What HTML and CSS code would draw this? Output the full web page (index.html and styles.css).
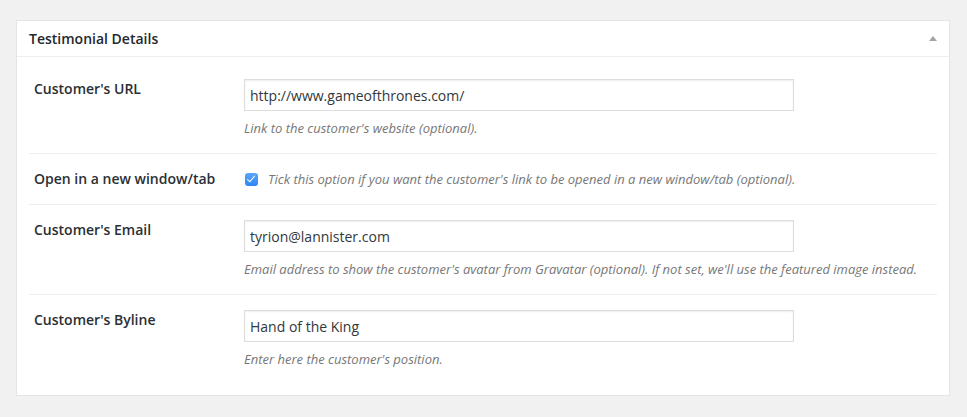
FILE: index.html
```html
<!DOCTYPE html>
<html lang="en">
<head>
<meta charset="utf-8">
<title>Testimonial Details</title>
<link rel="stylesheet" href="styles.css">
</head>
<body>
<div class="postbox">
  <div class="postbox-header">
    <h2 class="hndle">Testimonial Details</h2>
    <span class="toggle-arrow" aria-hidden="true"></span>
  </div>
  <div class="inside">
    <table class="form-table">
      <tbody>
        <tr>
          <th><label for="url">Customer's URL</label></th>
          <td>
            <input id="url" class="regular-text" type="text" value="http://www.gameofthrones.com/">
            <p class="description">Link to the customer's website (optional).</p>
          </td>
        </tr>
        <tr class="row-check">
          <th><label for="newtab">Open in a new window/tab</label></th>
          <td>
            <label class="check-label"><input id="newtab" class="check" type="checkbox" checked><span class="description inline">Tick this option if you want the customer's link to be opened in a new window/tab (optional).</span></label>
          </td>
        </tr>
        <tr>
          <th><label for="email">Customer's Email</label></th>
          <td>
            <input id="email" class="regular-text" type="text" value="tyrion@lannister.com">
            <p class="description">Email address to show the customer's avatar from Gravatar (optional). If not set, we'll use the featured image instead.</p>
          </td>
        </tr>
        <tr>
          <th><label for="byline">Customer's Byline</label></th>
          <td>
            <input id="byline" class="regular-text" type="text" value="Hand of the King">
            <p class="description">Enter here the customer's position.</p>
          </td>
        </tr>
      </tbody>
    </table>
  </div>
</div>
</body>
</html>
```
FILE: styles.css
```css
html, body {
  margin: 0;
  padding: 0;
  background: #f1f1f1;
}
body {
  font-family: "Open Sans", "Liberation Sans", sans-serif;
  color: #444;
  font-size: 13px;
  padding: 20px 0 0 16px;
}
.postbox {
  width: 934px;
  box-sizing: border-box;
  background: #fff;
  border: 1px solid #e5e5e5;
  box-shadow: 0 1px 1px rgba(0, 0, 0, 0.04);
}
.postbox-header {
  display: flex;
  align-items: center;
  justify-content: space-between;
  border-bottom: 1px solid #eee;
  height: 36px;
  box-sizing: border-box;
}
.hndle {
  margin: 0;
  padding: 0 12px;
  font-size: 14px;
  font-weight: 600;
  line-height: 1.4;
  color: #23282d;
}
.toggle-arrow {
  width: 0;
  height: 0;
  border-left: 4px solid transparent;
  border-right: 4px solid transparent;
  border-bottom: 5px solid #a0a5aa;
  margin-right: 12px;
  margin-top: 0;
}
.inside {
  padding: 7px 12px 11px;
}
.form-table {
  width: 100%;
  border-collapse: collapse;
}
.form-table tr {
  border-bottom: 1px solid #eee;
}
.form-table tr:last-child {
  border-bottom: 0;
}
.form-table th {
  width: 205px;
  box-sizing: border-box;
  text-align: left;
  vertical-align: top;
  padding: 16px 10px 15px 5px;
  font-size: 14px;
  font-weight: 600;
  line-height: 1.3;
  color: #2a2f34;
}
.form-table td {
  vertical-align: top;
  padding: 15px 10px;
}
.regular-text {
  display: block;
  width: 550px;
  height: 32px;
  box-sizing: border-box;
  margin: 0;
  padding: 0 5px;
  border: 1px solid #ddd;
  box-shadow: inset 0 1px 2px rgba(0, 0, 0, 0.07);
  background: #fff;
  font-family: "Open Sans", "Liberation Sans", sans-serif;
  font-size: 14px;
  color: #32373c;
  outline: none;
}
.description {
  margin: 8px 0 0;
  font-size: 13px;
  font-style: italic;
  line-height: 19px;
  color: #777;
}
.description.inline {
  margin: 0;
  line-height: 20px;
}
.check-label {
  display: flex;
  align-items: center;
  height: 20px;
  padding-left: 1px;
}
.check {
  appearance: none;
  -webkit-appearance: none;
  width: 13px;
  height: 13px;
  margin: 0 10px 0 0;
  border-radius: 3px;
  background: linear-gradient(#5aa6fb, #2f86f5);
  border: 0;
  position: relative;
  flex: none;
}
.check::after {
  content: "";
  position: absolute;
  left: 4px;
  top: 1.5px;
  width: 3px;
  height: 7px;
  border: solid #fff;
  border-width: 0 1.6px 1.6px 0;
  transform: rotate(40deg);
}
```
